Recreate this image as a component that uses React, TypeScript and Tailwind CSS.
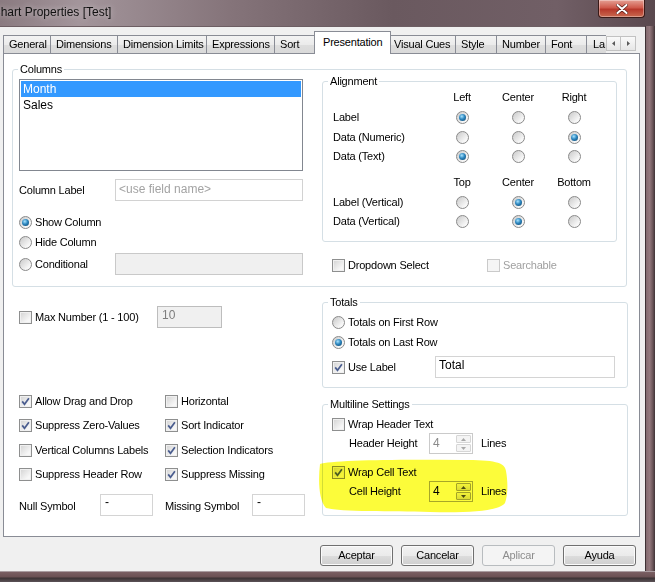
import React from "react";

function Radio({ on }: { on?: boolean }) {
  return (
    <span className="w-[13px] h-[13px] shrink-0 rounded-full border border-[#8a8a8a] bg-[linear-gradient(135deg,#c9c9c9,#f7f7f7_75%)] flex items-center justify-center">
      {on && (
        <span className="w-[7px] h-[7px] rounded-full bg-[radial-gradient(circle_at_40%_35%,#a9e4ff_0%,#2c86bf_45%,#0c3e63_100%)]" />
      )}
    </span>
  );
}

function Check({ on, dis }: { on?: boolean; dis?: boolean }) {
  return (
    <span
      className={`w-[13px] h-[13px] shrink-0 border flex items-center justify-center ${
        dis
          ? "border-[#cacaca] bg-[#f5f5f5]"
          : "border-[#8e8f8f] bg-[linear-gradient(135deg,#d2d2d2,#f7f7f7_75%)] shadow-[inset_0_0_0_1px_#f0f0f0]"
      }`}
    >
      {on && (
        <svg width="9" height="9" viewBox="0 0 9 9">
          <path d="M1.2 4.4 L3.5 7.3 L7.9 1.2" fill="none" stroke="#4a5d8f" strokeWidth="1.7" />
        </svg>
      )}
    </span>
  );
}

function Group({ label, className, children }: { label: string; className?: string; children?: React.ReactNode }) {
  return (
    <div className={`relative border border-[#d5dfe5] rounded-[3px] ${className ?? ""}`}>
      <span className="absolute left-[5px] -top-[7px] bg-white px-[2px] leading-[13px]">{label}</span>
      {children}
    </div>
  );
}

function Arrow({ up, dis }: { up?: boolean; dis?: boolean }) {
  return (
    <svg width="5" height="3" viewBox="0 0 5 3">
      <path d={up ? "M0 3 L2.5 0 L5 3 Z" : "M0 0 L2.5 3 L5 0 Z"} fill={dis ? "#a8a8a8" : "#4d4d4d"} />
    </svg>
  );
}

function Spin({ dis }: { dis?: boolean }) {
  return (
    <div className={`w-[44px] h-[21px] border flex bg-white ${dis ? "border-[#cacaca] text-[#8a8a8a]" : "border-[#a9a9a9] text-black"}`}>
      <div className="flex-1 pl-[3px] pt-[3px] leading-[13px] text-[12px] tracking-normal">4</div>
      <div className="w-[17px] flex flex-col p-[1px] gap-[1px]">
        <div className={`flex-1 border rounded-[1px] flex items-center justify-center ${dis ? "border-[#d6d6d6] bg-[#f4f4f4]" : "border-[#a5a5a5] bg-[linear-gradient(#f6f6f6,#dedede)]"}`}>
          <Arrow up dis={dis} />
        </div>
        <div className={`flex-1 border rounded-[1px] flex items-center justify-center ${dis ? "border-[#d6d6d6] bg-[#f4f4f4]" : "border-[#a5a5a5] bg-[linear-gradient(#f6f6f6,#dedede)]"}`}>
          <Arrow dis={dis} />
        </div>
      </div>
    </div>
  );
}

function Btn({ label, dis }: { label: string; dis?: boolean }) {
  return (
    <div
      className={`w-[73px] h-[21px] rounded-[3px] border flex items-center justify-center ${
        dis
          ? "border-[#b8bcbf] bg-[#f4f4f4] text-[#8d8d8d]"
          : "border-[#707070] bg-[linear-gradient(#f2f2f2_0%,#ebebeb_50%,#dddddd_51%,#cfcfcf_100%)] shadow-[inset_0_0_0_1px_#fbfbfb]"
      }`}
    >
      {label}
    </div>
  );
}

const tabsA: [string, number][] = [
  ["General", 48],
  ["Dimensions", 67],
  ["Dimension Limits", 89],
  ["Expressions", 68],
  ["Sort", 41],
];
const tabsB: [string, number][] = [
  ["Visual Cues", 67],
  ["Style", 41],
  ["Number", 49],
  ["Font", 41],
];

function Tab({ label, w, first }: { label: string; w: number; first?: boolean }) {
  return (
    <div
      style={{ width: w }}
      className={`h-[18px] shrink-0 border-t border-r border-[#898c95] ${first ? "border-l" : ""} bg-[linear-gradient(#f3f3f3,#ebebeb_50%,#dedede_51%,#d9d9d9)] flex items-center pl-[5px]`}
    >
      {label}
    </div>
  );
}

export default function App() {
  return (
    <div className="w-[655px] h-[582px] overflow-hidden relative bg-[#4a3d41] font-['Liberation_Sans',Arial,sans-serif] text-[11px] tracking-[-0.2px] text-black">
      {/* title bar */}
      <div className="h-[26px] flex items-start bg-[linear-gradient(90deg,#8a7a80_0%,#a3959b_12%,#85747a_35%,#6a595f_60%,#715f66_85%,#5a484e_100%)]">
        <div className="ml-[-8px] mt-[3px] text-[12px] tracking-normal text-[#111] [text-shadow:0_0_6px_rgba(255,255,255,0.6)]">
          Chart Properties [Test]
        </div>
        <div className="ml-auto mr-[10px] w-[47px] h-[18px] rounded-b-[4px] border border-t-0 border-[#3b1a17] bg-[linear-gradient(#e5a094,#cf5a4c_45%,#b7382b_55%,#c9694f)] flex items-center justify-center shadow-[inset_0_0_0_1px_rgba(255,255,255,0.35)]">
          <svg width="12" height="10" viewBox="0 0 12 10">
            <path d="M1.5 1 L10.5 9 M10.5 1 L1.5 9" stroke="#5a1d17" strokeWidth="3.4" strokeLinecap="round" />
            <path d="M1.5 1 L10.5 9 M10.5 1 L1.5 9" stroke="#ffffff" strokeWidth="2" strokeLinecap="round" />
          </svg>
        </div>
      </div>

      <div className="flex h-[545px]">
        {/* client */}
        <div className="w-[645px] h-[545px] bg-[#f0f0f0] border-t border-[#6d5e63] pt-[4px]">
          {/* tabs */}
          <div className="flex items-end h-[22px] pl-[3px]">
            {tabsA.map(([l, w], i) => (
              <Tab key={l} label={l} w={w} first={i === 0} />
            ))}
            <div className="relative z-10 self-start w-[77px] h-[23px] -mx-[2px] shrink-0 border-t border-l border-r border-[#898c95] bg-white flex items-center pl-[8px] pb-[2px]">
              Presentation
            </div>
            {tabsB.map(([l, w]) => (
              <Tab key={l} label={l} w={w} />
            ))}
            <div className="w-[19px] h-[18px] shrink-0 overflow-hidden border-t border-[#898c95] bg-[linear-gradient(#f3f3f3,#ebebeb_50%,#dedede_51%,#d9d9d9)] flex items-center pl-[6px]">
              La
            </div>
            <div className="flex mb-[2px] shrink-0">
              <div className="w-[15px] h-[15px] border border-[#c2c2c2] bg-[linear-gradient(#fafafa,#e6e6e6)] flex items-center justify-center">
                <svg width="3" height="5" viewBox="0 0 3 5"><path d="M3 0 L0 2.5 L3 5 Z" fill="#5a5a5a" /></svg>
              </div>
              <div className="w-[15px] h-[15px] border border-l-0 border-[#c2c2c2] bg-[linear-gradient(#fafafa,#e6e6e6)] flex items-center justify-center">
                <svg width="3" height="5" viewBox="0 0 3 5"><path d="M0 0 L3 2.5 L0 5 Z" fill="#5a5a5a" /></svg>
              </div>
            </div>
          </div>

          {/* panel */}
          <div className="ml-[3px] w-[637px] h-[484px] border border-[#898c95] bg-white">
            {/* Columns group */}
            <Group label="Columns" className="ml-[8px] mt-[15px] w-[615px] flex pl-[6px] pt-[9px] pb-[11px]">
              <div className="w-[284px] flex flex-col">
                <div className="h-[92px] border border-[#828790] p-[1px]">
                  <div className="h-[16px] bg-[#3399ff] text-white pl-[2px] flex items-center text-[12px] tracking-normal">Month</div>
                  <div className="h-[16px] pl-[2px] flex items-center text-[12px] tracking-normal">Sales</div>
                </div>
                <div className="mt-[8px] h-[22px] flex items-center">
                  <span className="w-[96px]">Column Label</span>
                  <div className="w-[188px] h-[22px] border border-[#d2d2d2] text-[#a3a3a3] pl-[3px] pt-[3px] leading-[13px] text-[12px] tracking-normal">
                    &lt;use field name&gt;
                  </div>
                </div>
                <div className="mt-[11px] h-[20px] flex items-center gap-[3px]">
                  <Radio on />
                  <span>Show Column</span>
                </div>
                <div className="h-[21px] flex items-center gap-[3px]">
                  <Radio />
                  <span>Hide Column</span>
                </div>
                <div className="h-[22px] flex items-center">
                  <div className="w-[96px] flex items-center gap-[3px]">
                    <Radio />
                    <span>Conditional</span>
                  </div>
                  <div className="w-[188px] h-[22px] border border-[#c9c9c9] bg-[#f0f0f0]" />
                </div>
              </div>

              <div className="ml-[19px] w-[295px] pt-[2px] flex flex-col">
                <Group label="Alignment" className="h-[161px] pl-[10px] pt-[5px]">
                  <div className="grid grid-cols-[101px_56px_56px_56px]">
                    <div className="h-[20px]" />
                    <div className="h-[20px] flex items-center justify-center">Left</div>
                    <div className="h-[20px] flex items-center justify-center">Center</div>
                    <div className="h-[20px] flex items-center justify-center">Right</div>

                    <div className="h-[20px] flex items-center">Label</div>
                    <div className="flex items-center justify-center"><Radio on /></div>
                    <div className="flex items-center justify-center"><Radio /></div>
                    <div className="flex items-center justify-center"><Radio /></div>

                    <div className="h-[20px] flex items-center">Data (Numeric)</div>
                    <div className="flex items-center justify-center"><Radio /></div>
                    <div className="flex items-center justify-center"><Radio /></div>
                    <div className="flex items-center justify-center"><Radio on /></div>

                    <div className="h-[19px] flex items-center">Data (Text)</div>
                    <div className="flex items-center justify-center"><Radio on /></div>
                    <div className="flex items-center justify-center"><Radio /></div>
                    <div className="flex items-center justify-center"><Radio /></div>

                    <div className="h-[26px]" />
                    <div className="h-[26px] pt-[7px] flex items-center justify-center">Top</div>
                    <div className="h-[26px] pt-[7px] flex items-center justify-center">Center</div>
                    <div className="h-[26px] pt-[7px] flex items-center justify-center">Bottom</div>

                    <div className="h-[20px] flex items-center">Label (Vertical)</div>
                    <div className="flex items-center justify-center"><Radio /></div>
                    <div className="flex items-center justify-center"><Radio on /></div>
                    <div className="flex items-center justify-center"><Radio /></div>

                    <div className="h-[19px] flex items-center">Data (Vertical)</div>
                    <div className="flex items-center justify-center"><Radio /></div>
                    <div className="flex items-center justify-center"><Radio on /></div>
                    <div className="flex items-center justify-center"><Radio /></div>
                  </div>
                </Group>
                <div className="mt-[13px] h-[20px] pl-[10px] flex items-center">
                  <div className="w-[155px] flex items-center gap-[3px]">
                    <Check />
                    <span>Dropdown Select</span>
                  </div>
                  <div className="flex items-center gap-[3px] text-[#a0a0a0]">
                    <Check dis />
                    <span>Searchable</span>
                  </div>
                </div>
              </div>
            </Group>

            {/* lower section */}
            <div className="ml-[8px] flex">
              <div className="w-[310px] pl-[7px] flex flex-col">
                <div className="mt-[19px] h-[22px] flex items-center">
                  <div className="w-[138px] flex items-center gap-[3px]">
                    <Check />
                    <span>Max Number (1 - 100)</span>
                  </div>
                  <div className="w-[65px] h-[22px] border border-[#bdbdbd] bg-[#f0f0f0] text-[#7d7d7d] pl-[4px] pt-[2px] leading-[13px] text-[12px] tracking-normal">
                    10
                  </div>
                </div>

                <div className="mt-[63px] h-[20px] flex items-center">
                  <div className="w-[146px] flex items-center gap-[3px]"><Check on /><span>Allow Drag and Drop</span></div>
                  <div className="flex items-center gap-[3px]"><Check /><span>Horizontal</span></div>
                </div>
                <div className="mt-[4px] h-[20px] flex items-center">
                  <div className="w-[146px] flex items-center gap-[3px]"><Check on /><span>Suppress Zero-Values</span></div>
                  <div className="flex items-center gap-[3px]"><Check on /><span>Sort Indicator</span></div>
                </div>
                <div className="mt-[5px] h-[20px] flex items-center">
                  <div className="w-[146px] flex items-center gap-[3px]"><Check /><span>Vertical Columns Labels</span></div>
                  <div className="flex items-center gap-[3px]"><Check on /><span>Selection Indicators</span></div>
                </div>
                <div className="mt-[4px] h-[20px] flex items-center">
                  <div className="w-[146px] flex items-center gap-[3px]"><Check /><span>Suppress Header Row</span></div>
                  <div className="flex items-center gap-[3px]"><Check on /><span>Suppress Missing</span></div>
                </div>

                <div className="mt-[10px] h-[22px] flex items-center">
                  <span className="w-[81px] pt-[3px]">Null Symbol</span>
                  <div className="w-[53px] h-[22px] border border-[#d4d4d4] pl-[4px] pt-[1px] leading-[13px] text-[12px]">-</div>
                  <span className="w-[12px]" />
                  <span className="w-[87px] pt-[3px]">Missing Symbol</span>
                  <div className="w-[53px] h-[22px] border border-[#d4d4d4] pl-[4px] pt-[1px] leading-[13px] text-[12px]">-</div>
                </div>
              </div>

              <div className="w-[306px] flex flex-col">
                <Group label="Totals" className="mt-[15px] h-[86px] pl-[9px] pt-[9px]">
                  <div className="h-[20px] flex items-center gap-[3px]"><Radio /><span>Totals on First Row</span></div>
                  <div className="h-[20px] flex items-center gap-[3px]"><Radio on /><span>Totals on Last Row</span></div>
                  <div className="mt-[4px] h-[22px] flex items-center">
                    <div className="w-[103px] flex items-center gap-[3px]"><Check on /><span>Use Label</span></div>
                    <div className="w-[180px] h-[22px] border border-[#d4d4d4] pl-[3px] pt-[2px] leading-[13px] text-[12px] tracking-normal">Total</div>
                  </div>
                </Group>
                <Group label="Multiline Settings" className="mt-[16px] h-[112px] pl-[9px] pt-[9px]">
                  <div className="h-[20px] flex items-center gap-[3px]"><Check /><span>Wrap Header Text</span></div>
                  <div className="-mt-px h-[21px] pl-[17px] flex items-center">
                    <span className="w-[80px]">Header Height</span>
                    <Spin dis />
                    <span className="ml-[8px]">Lines</span>
                  </div>
                  <div className="mt-[8px] h-[20px] flex items-center gap-[3px]"><Check on /><span>Wrap Cell Text</span></div>
                  <div className="-mt-px h-[21px] pl-[17px] flex items-center">
                    <span className="w-[80px]">Cell Height</span>
                    <Spin />
                    <span className="ml-[8px]">Lines</span>
                  </div>
                </Group>
              </div>
            </div>
          </div>

          {/* buttons */}
          <div className="mt-[8px] h-[21px] flex justify-end gap-[8px] pr-[9px]">
            <Btn label="Aceptar" />
            <Btn label="Cancelar" />
            <Btn label="Aplicar" dis />
            <Btn label="Ayuda" />
          </div>
        </div>
        {/* right frame */}
        <div className="w-[10px] h-[545px] border-l border-[#3e3134] bg-[linear-gradient(90deg,#836a6f,#94797e_40%,#6b5559_75%,#3f3336)]" />
      </div>
      {/* bottom frame */}
      <div className="h-[11px] border-t border-[#a99ca0] bg-[linear-gradient(#7a5f63,#6a5053_50%,#3b3234_60%,#5b5256)]" />

      {/* yellow highlight annotation */}
      <svg className="absolute left-0 top-0 pointer-events-none mix-blend-multiply" width="655" height="582" viewBox="0 0 655 582">
        <path
          d="M320 464 C 330 460, 400 459, 462 460 C 494 460, 505 462, 506 471 C 508 482, 508 495, 505 503 C 499 511, 470 513, 430 512 C 390 511, 342 512, 326 508 C 319 500, 318 482, 320 464 Z"
          fill="#fcfc3a"
        />
      </svg>
    </div>
  );
}
